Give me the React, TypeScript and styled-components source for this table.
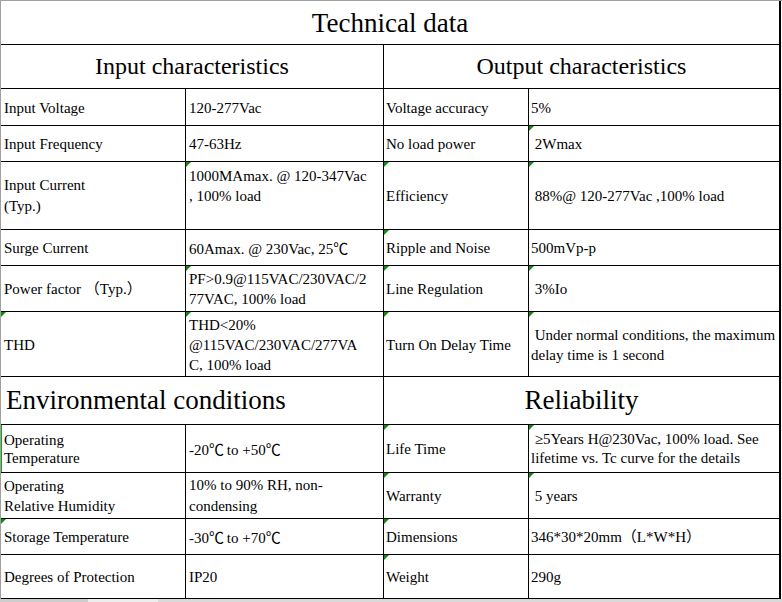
import React from "react";
import styled, { createGlobalStyle, css } from "styled-components";

const Global = createGlobalStyle`
  html, body { margin: 0; padding: 0; background: #fff; }
  body {
    font-family: "Liberation Serif", "Times New Roman", "Noto Sans CJK SC", serif;
    color: #000;
  }
`;

const Frame = styled.div`
  width: 782px;
  height: 602px;
  box-sizing: border-box;
  display: flex;
  flex-direction: column;
  border-top: 1px solid #a0a0a0;
  overflow: hidden;
`;

const Sheet = styled.div<{ $rows: string }>`
  display: grid;
  grid-template-columns: 184px 197px 144px 250px;
  grid-template-rows: ${(p) => p.$rows};
  gap: 1px;
  background: #000;
  padding: 0 2px 1px 0;
  border-left: 1px solid #a0a0a0;
  width: max-content;
`;

const Title = styled.div`
  grid-column: 1 / -1;
  background: #fff;
  display: flex;
  align-items: center;
  justify-content: center;
  font-size: 27px;
  padding-top: 1px;
`;

const Section = styled.div<{ $size: number; $left?: boolean }>`
  grid-column: span 2;
  background: #fff;
  display: flex;
  align-items: center;
  justify-content: ${(p) => (p.$left ? "flex-start" : "center")};
  padding-left: ${(p) => (p.$left ? "5px" : "0")};
  font-size: ${(p) => p.$size}px;
`;

const Cell = styled.div<{
  $top?: boolean;
  $pad: number;
  $lh: number;
  $mark?: boolean;
  $edge?: boolean;
}>`
  position: relative;
  background: #fff;
  display: flex;
  flex-direction: column;
  justify-content: ${(p) => (p.$top ? "flex-start" : "center")};
  padding: ${(p) => (p.$top ? "4px" : "1px")} 0 0 ${(p) => p.$pad}px;
  font-size: 15px;
  line-height: ${(p) => p.$lh}px;
  white-space: pre;
  overflow: hidden;
  ${(p) =>
    p.$edge &&
    css`
      box-shadow: inset 1px 0 0 #1f9a1f;
    `}
  ${(p) =>
    p.$mark &&
    css`
      &::before {
        content: "";
        position: absolute;
        left: 0;
        top: 0;
        border-top: 5px solid #118a11;
        border-right: 5px solid transparent;
      }
    `}
`;

const Line = styled.span`
  display: block;
`;

const Unit = styled.span`
  font-family: "Noto Sans CJK SC", sans-serif;
  font-size: 15px;
  letter-spacing: -1px;
`;

const ScrollStrip = styled.div`
  display: flex;
  height: 3px;
  flex: none;
`;

const StripPart = styled.div<{ $w?: number; $tone: string }>`
  background: ${(p) => p.$tone};
  ${(p) => (p.$w ? `width: ${p.$w}px;` : "flex: 1;")}
`;

type C = { t: string[]; mark?: boolean; top?: boolean; lh?: number; edge?: boolean };
type Row = [C, C, C, C];

const c = (t: string | string[], o: Partial<C> = {}): C => ({
  t: Array.isArray(t) ? t : [t],
  ...o,
});

const upper: Row[] = [
  [c("Input Voltage"), c("120-277Vac"), c("Voltage accuracy"), c("5%")],
  [c("Input Frequency"), c("47-63Hz"), c("No load power"), c(" 2Wmax", { mark: true })],
  [
    c(["Input Current", "(Typ.)"], { lh: 21 }),
    c(["1000MAmax. @ 120-347Vac", ", 100% load"], { mark: true, top: true }),
    c("Efficiency", { mark: true }),
    c(" 88%@ 120-277Vac ,100% load", { mark: true }),
  ],
  [c("Surge Current"), c("60Amax. @ 230Vac, 25℃"), c("Ripple and Noise", { mark: true }), c("500mVp-p")],
  [
    c("Power factor （Typ.）"),
    c(["PF>0.9@115VAC/230VAC/2", "77VAC, 100% load"], { mark: true }),
    c("Line Regulation", { mark: true }),
    c(" 3%Io", { mark: true }),
  ],
  [
    c("THD", { mark: true }),
    c(["THD<20%", "@115VAC/230VAC/277VA", "C, 100% load"], { mark: true }),
    c("Turn On Delay Time", { mark: true }),
    c([" Under normal conditions, the maximum", "delay time is 1 second"], { mark: true }),
  ],
];

const lower: Row[] = [
  [
    c(["Operating", "Temperature"], { lh: 18, edge: true }),
    c("-20℃ to +50℃"),
    c("Life Time", { mark: true }),
    c([" ≥5Years H@230Vac, 100% load. See", "lifetime vs. Tc curve for the details"], {
      mark: true,
      lh: 19,
    }),
  ],
  [
    c(["Operating", "Relative Humidity"]),
    c(["10% to 90% RH, non-", "condensing"], { lh: 21 }),
    c("Warranty", { mark: true }),
    c(" 5 years", { mark: true }),
  ],
  [
    c("Storage Temperature", { mark: true }),
    c("-30℃ to +70℃"),
    c("Dimensions", { mark: true }),
    c("346*30*20mm（L*W*H）"),
  ],
  [c("Degrees of Protection"), c("IP20"), c("Weight", { mark: true }), c("290g")],
];

const rowHeights = [43, 43, 36, 35, 67, 35, 45, 64, 47, 47, 45, 35, 43];

const pads = [3, 3, 2, 2];

const withUnits = (s: string) =>
  s.split(/(℃)/).map((part, i) => (part === "℃" ? <Unit key={i}>℃</Unit> : part));

const renderRows = (rows: Row[], key: string) =>
  rows.map((row, ri) =>
    row.map((cell, ci) => (
      <Cell
        key={`${key}-${ri}-${ci}`}
        $pad={pads[ci]}
        $lh={cell.lh ?? 20}
        $top={cell.top}
        $mark={cell.mark}
        $edge={cell.edge}
      >
        {cell.t.map((l, li) => (
          <Line key={li}>{withUnits(l)}</Line>
        ))}
      </Cell>
    ))
  );

export default function App() {
  return (
    <>
      <Global />
      <Frame>
        <Sheet $rows={rowHeights.map((h) => `${h}px`).join(" ")}>
          <Title>Technical data</Title>
          <Section $size={24}>Input characteristics</Section>
          <Section $size={24}>Output characteristics</Section>
          {renderRows(upper, "u")}
          <Section $size={27} $left>
            Environmental conditions
          </Section>
          <Section $size={27}>Reliability</Section>
          {renderRows(lower, "l")}
        </Sheet>
        <ScrollStrip>
          <StripPart $w={88} $tone="#cdcdcd" />
          <StripPart $w={70} $tone="#ededed" />
          <StripPart $tone="#d9d9d9" />
        </ScrollStrip>
      </Frame>
    </>
  );
}
